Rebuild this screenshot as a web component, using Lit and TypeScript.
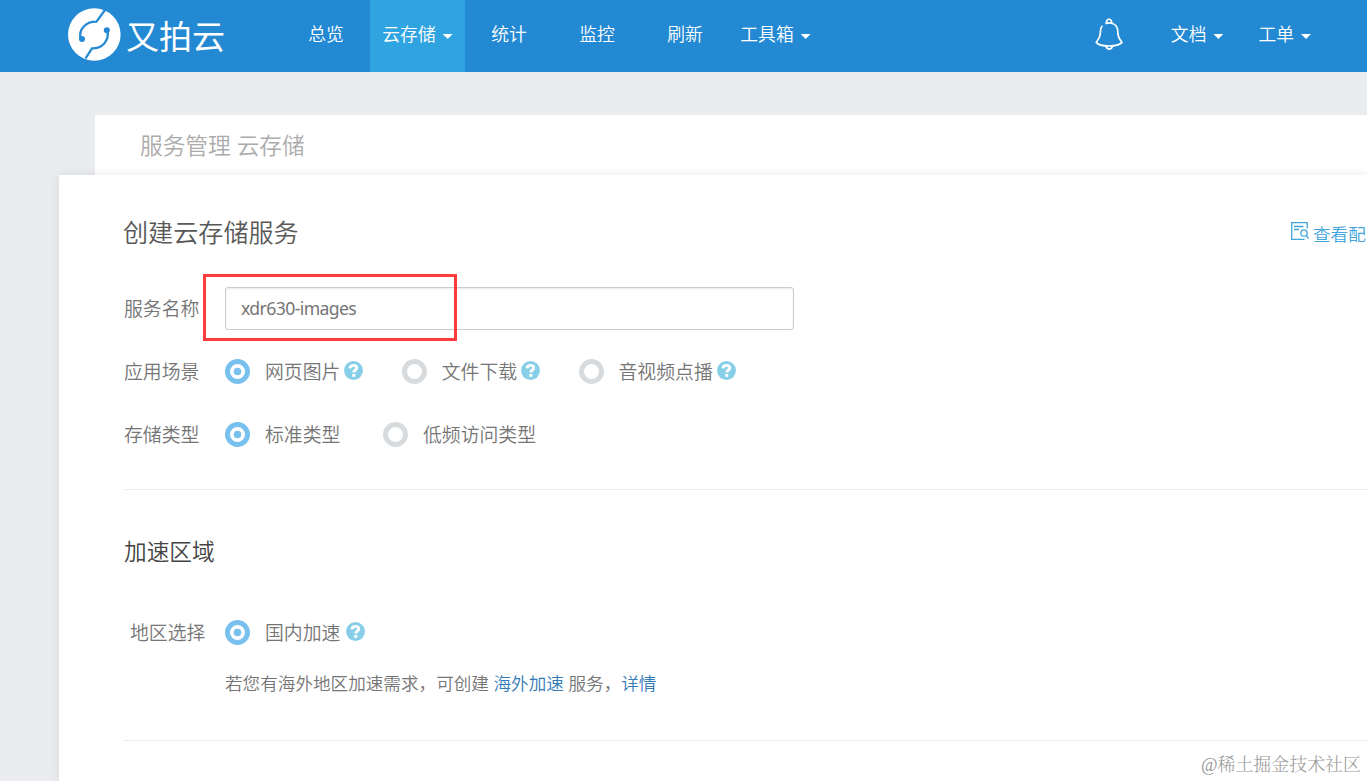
import { LitElement, html, css, svg, nothing } from "lit";
import { customElement, property } from "lit/decorators.js";

const FONT = css`"Noto Sans", "Noto Sans CJK SC", sans-serif`;

@customElement("radio-option")
class RadioOption extends LitElement {
  @property({ type: Boolean }) checked = false;
  @property({ type: Boolean }) help = false;
  @property() label = "";
  static styles = css`
    :host { display: flex; height: 25px; align-items: center; white-space: nowrap; }
    .radio { flex: none; width: 25px; height: 25px; display: block; }
    .label { margin-left: 15px; line-height: 25px; padding-top: 2px; }
    .help { flex: none; width: 19px; height: 19px; margin-left: var(--help-gap, 4px); margin-top: -2px; }
  `;
  render() {
    return html`
      <svg class="radio" viewBox="0 0 25 25">
        <circle cx="12.5" cy="12.5" r="10" fill="#fff" stroke=${this.checked ? "#78c0ed" : "#d7dbde"} stroke-width="5" />
        ${this.checked ? svg`<circle cx="12.5" cy="12.5" r="3.8" fill="#78c0ed" />` : nothing}
      </svg>
      <span class="label">${this.label}</span>
      ${this.help
        ? html`<svg class="help" viewBox="0 0 19 19">
            <circle cx="9.5" cy="9.5" r="9.4" fill="#87cfe8" />
            <path d="M6 7.3C6.2 5.1 7.6 4.4 9.5 4.4C11.6 4.4 12.7 5.3 12.7 6.9C12.7 9.1 9.8 8.9 9.8 11.5" fill="none" stroke="#fff" stroke-width="2.9" />
            <rect x="8.2" y="13" width="3.1" height="2.8" fill="#fff" />
          </svg>`
        : nothing}
    `;
  }
}

@customElement("app-root")
class AppRoot extends LitElement {
  static styles = css`
    :host {
      display: block; position: relative; width: 100%; height: 781px; overflow: hidden;
      background: #eaecf0; color: #757575; font: 350 18.85px/26px ${FONT};
    }
    * { box-sizing: border-box; }
    .bar { display: flex; height: 72px; background: #2389d3; color: #fff; font-size: 17.8px; line-height: 68px; white-space: nowrap; }
    .brand { display: flex; width: 282px; padding-left: 67px; }
    .mark { width: 54px; height: 54px; margin-top: 7px; }
    .word { margin-left: 5px; font-size: 33px; line-height: 73px; font-weight: 400; }
    .nav { display: flex; }
    .item { display: flex; justify-content: center; width: 88px; }
    .item.wide { width: 95px; }
    .item.on { background: #2fa4e1; }
    .caret { width: 10px; height: 5px; margin: 34px 0 0 7px; background: #fff; clip-path: polygon(0 0, 100% 0, 50% 100%); }
    .nav .item:last-child { width: 93px; }
    .right { display: flex; margin-left: auto; padding-right: 56px; gap: 35px; }
    .right .item { width: auto; }
    .bell { width: 30px; height: 34px; margin: 17px 12px 0 0; }
    .crumb { margin: 43px 0 0 95px; height: 60px; padding-left: 45px; background: #fff; color: #ababab; font-size: 22.7px; line-height: 62px; }
    .panel { position: relative; margin-left: 59px; height: 606px; padding-left: 65px; background: #fff; box-shadow: 0 0 10px rgba(0, 0, 0, .09); }
    .head { display: flex; justify-content: space-between; height: 112px; padding-top: 40px; }
    .title { margin: 0 0 0 -1px; font-weight: 350; font-size: 25.1px; line-height: 34px; color: #585858; }
    .view { display: flex; width: 77px; white-space: nowrap; color: #42a5dc; font-size: 17.6px; line-height: 38px; text-decoration: none; height: 38px; }
    .view svg { flex: none; width: 20px; height: 20px; margin: 6px 3px 0 0; }
    .row { display: flex; align-items: center; white-space: nowrap; }
    .name { width: 101px; flex: none; }
    .input { width: 569px; height: 43px; padding: 0 15px 2px; border: 1px solid #ccc; border-radius: 3px; box-shadow: inset 0 1px 2px rgba(0,0,0,.09); font: 400 17.6px/39px ${FONT}; color: #757575; letter-spacing: -.6px; outline: none; background: #fff; }
    .scene { margin-top: 28px; gap: 38.4px; height: 26px; }
    .kind { margin-top: 37px; gap: 42.6px; height: 26px; }
    .scene .name, .kind .name, .region .name { padding-top: 1px; }
    .scene .name { margin-right: -38.4px; }
    .kind .name { margin-right: -42.6px; }
    .rule { border-top: 1px solid #e9e9ee; }
    .first { margin-top: 42px; }
    .sub { margin: 45px 0 0; font-weight: 350; font-size: 22.7px; line-height: 34px; color: #444; }
    .region { margin-top: 50px; height: 26px; --help-gap: 5.5px; }
    .region .name { padding-left: 6px; padding-top: 2px; }
    .hint { margin: 25px 0 0 101px; font-size: 17.6px; line-height: 26px; white-space: nowrap; }
    .hint a { color: #337ab7; text-decoration: none; }
    .last { margin-top: 44px; }
    .focus { position: absolute; left: 203px; top: 274px; width: 254px; height: 67px; border: 3px solid #ff3b3b; }
    .stamp { position: absolute; right: 6px; bottom: 3px; font-size: 17.95px; line-height: 26px; font-family: "Liberation Serif", "Noto Serif CJK SC", "Noto Sans CJK SC", serif; color: #999; }
  `;

  item(label: string, caret = false, on = false) {
    return html`<div class="item ${caret ? "wide" : ""} ${on ? "on" : ""}">
      <span>${label}</span>${caret ? html`<span class="caret"></span>` : nothing}
    </div>`;
  }

  render() {
    return html`
      <header class="bar">
        <div class="brand">
          <svg class="mark" viewBox="0 0 54 54">
            <circle cx="27.3" cy="27.5" r="26.3" fill="#fff" />
            <g fill="none" stroke="#2389d3" stroke-width="2.3">
              <path d="M38 3L29.5 14.7C19 14.5 11.5 22 13.5 31.5" />
              <path d="M18.5 51.5L25 41.3C35 41.5 42.5 34 40.5 23.5" />
            </g>
            <circle cx="15" cy="32" r="3" fill="#2389d3" />
            <circle cx="39.8" cy="23.3" r="3" fill="#2389d3" />
          </svg>
          <span class="word">又拍云</span>
        </div>
        <nav class="nav">
          ${this.item("总览")}${this.item("云存储", true, true)}${this.item("统计")}${this.item("监控")}${this.item("刷新")}${this.item("工具箱", true)}
        </nav>
        <div class="right">
          <svg class="bell" viewBox="0 0 30 34" fill="none" stroke="#fff" stroke-width="1.7" stroke-linecap="round" stroke-linejoin="round">
            <path d="M12.2 6.5C17.5 4.7 23.5 7.5 23.7 13.8C23.9 19.5 24.8 21 28 25.4C26 27.6 21 29 15 29S4 27.6 2.2 25.4C5.2 21 6.3 19.5 6.5 14C6.5 12 7 10.5 8 9.3" />
            <path d="M12.4 6C12 1 18 1 17.7 6" />
            <path d="M12 29.3C13 33 17.5 33 18.5 29.3" />
          </svg>
          ${this.item("文档", true)}${this.item("工单", true)}
        </div>
      </header>
      <div class="crumb">服务管理 云存储</div>
      <main class="panel">
        <div class="head">
          <h1 class="title">创建云存储服务</h1>
          <a class="view">
            <svg viewBox="0 0 20 20" fill="none" stroke="#42a5dc" stroke-width="1.3">
              <path d="M17.2 7.5V1.7H1.7V18.4H14.5M4 5.5H13.5M4 8.5H9" />
              <circle cx="14" cy="12" r="3.2" /><path d="M16.2 14.5L18.5 17.5" />
            </svg><span>查看配</span>
          </a>
        </div>
        <div class="row"><span class="name">服务名称</span><input class="input" value="xdr630-images" /></div>
        <div class="row scene">
          <span class="name">应用场景</span>
          <radio-option checked help label="网页图片"></radio-option>
          <radio-option help label="文件下载"></radio-option>
          <radio-option help label="音视频点播"></radio-option>
        </div>
        <div class="row kind">
          <span class="name">存储类型</span>
          <radio-option checked label="标准类型"></radio-option>
          <radio-option label="低频访问类型"></radio-option>
        </div>
        <div class="rule first"></div>
        <h2 class="sub">加速区域</h2>
        <div class="row region"><span class="name">地区选择</span><radio-option checked help label="国内加速"></radio-option></div>
        <p class="hint">若您有海外地区加速需求，可创建 <a>海外加速</a> 服务，<a>详情</a></p>
        <div class="rule last"></div>
      </main>
      <div class="focus"></div>
      <div class="stamp">@稀土掘金技术社区</div>
    `;
  }
}
